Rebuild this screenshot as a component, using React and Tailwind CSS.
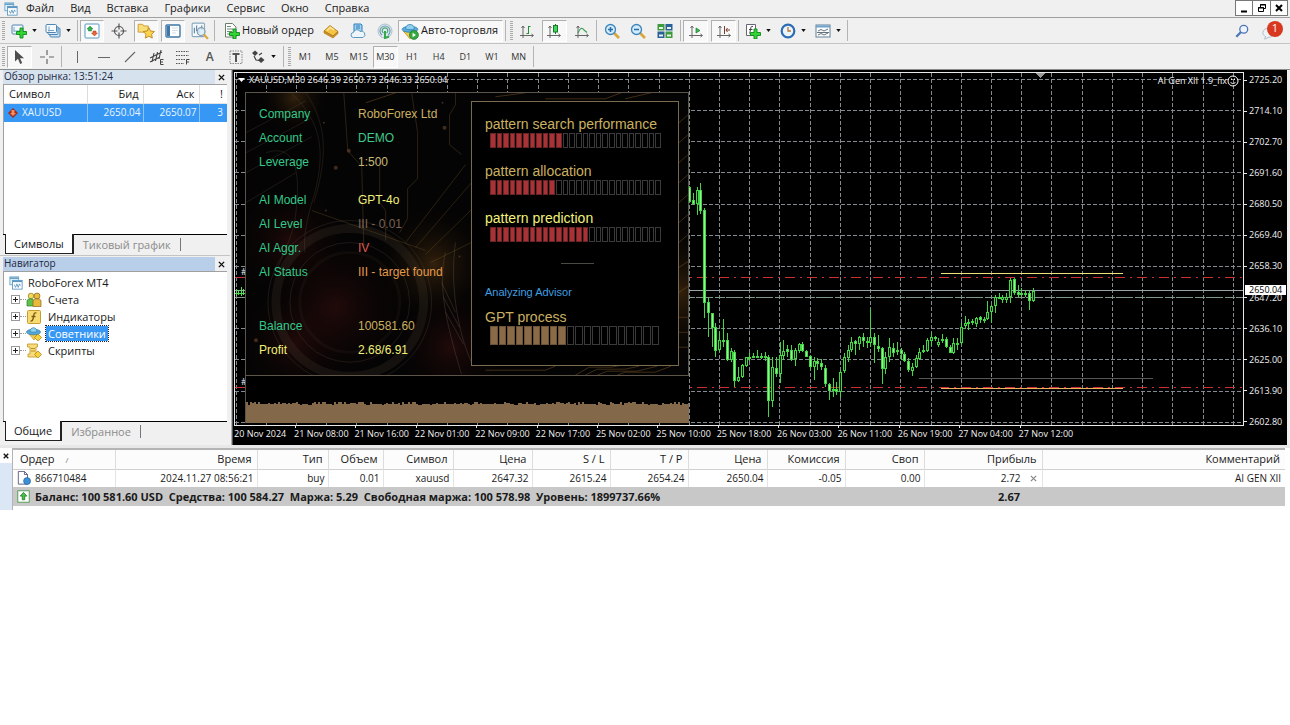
// src/App.jsx
import React from "react";

const MENU = ["Файл", "Вид", "Вставка", "Графики", "Сервис", "Окно", "Справка"];
const TIMEFRAMES = ["M1", "M5", "M15", "M30", "H1", "H4", "D1", "W1", "MN"];

const PRICES = [
  "2725.20", "2714.10", "2702.70", "2691.60", "2680.50", "2669.40",
  "2658.30", "2647.20", "2636.10", "2625.00", "2613.90", "2602.80",
];

const TIMES = [
  "21 Nov 08:00", "21 Nov 16:00", "22 Nov 01:00", "22 Nov 09:00", "22 Nov 17:00",
  "25 Nov 02:00", "25 Nov 10:00", "25 Nov 18:00", "26 Nov 03:00", "26 Nov 11:00",
  "26 Nov 19:00", "27 Nov 04:00", "27 Nov 12:00",
];

// [high, low, body top, body bottom, rising]
const CANDLES = [
  [114, 131, 115, 130, 0], [121, 133, 128, 132, 0], [115, 143, 118, 132, 1], [111, 142, 118, 139, 0],
  [136, 246, 138, 231, 0], [226, 265, 230, 241, 0], [241, 275, 241, 256, 0], [251, 285, 255, 279, 0],
  [260, 280, 268, 278, 1], [247, 275, 268, 269, 1], [261, 289, 268, 288, 0], [276, 290, 279, 288, 1],
  [278, 315, 280, 309, 0], [295, 310, 305, 309, 1], [292, 306, 293, 305, 1], [285, 295, 285, 294, 1],
  [281, 289, 285, 286, 1], [281, 286, 284, 285, 1], [278, 286, 284, 285, 1], [281, 287, 284, 286, 0],
  [280, 289, 284, 285, 1], [283, 345, 285, 329, 0], [285, 335, 295, 329, 1], [285, 305, 296, 302, 0],
  [270, 311, 283, 302, 1], [268, 288, 279, 284, 1], [273, 285, 277, 280, 0], [273, 289, 278, 288, 0],
  [276, 294, 278, 287, 1], [271, 281, 272, 279, 1], [270, 280, 272, 279, 0], [278, 285, 279, 285, 0],
  [283, 298, 284, 295, 0], [285, 308, 289, 295, 1], [286, 298, 289, 292, 0], [287, 298, 291, 295, 0],
  [293, 315, 296, 312, 0], [311, 328, 312, 319, 0], [306, 325, 317, 319, 0], [310, 323, 317, 320, 0],
  [298, 325, 300, 320, 1], [281, 301, 285, 299, 1], [273, 290, 278, 286, 1], [265, 280, 270, 278, 1],
  [268, 283, 269, 272, 0], [264, 278, 265, 272, 1], [261, 275, 265, 269, 0], [265, 276, 269, 271, 0],
  [237, 275, 265, 271, 1], [261, 291, 265, 273, 0], [263, 280, 274, 277, 0], [275, 312, 276, 297, 0],
  [280, 302, 285, 297, 1], [266, 290, 275, 285, 1], [271, 285, 276, 281, 0], [270, 283, 278, 280, 1],
  [276, 288, 278, 282, 0], [280, 290, 282, 289, 0], [286, 300, 289, 298, 0], [291, 304, 295, 299, 1],
  [283, 296, 286, 295, 1], [276, 288, 280, 287, 1], [273, 281, 278, 280, 0], [266, 280, 268, 279, 1],
  [261, 274, 265, 269, 1], [264, 269, 265, 267, 0], [266, 275, 270, 273, 1], [262, 271, 267, 269, 1],
  [265, 276, 267, 275, 0], [273, 281, 275, 281, 0], [266, 282, 271, 281, 1], [266, 278, 271, 272, 1],
  [251, 273, 255, 271, 1], [244, 257, 251, 254, 1], [247, 258, 250, 252, 1], [247, 253, 249, 251, 0],
  [245, 255, 246, 252, 1], [244, 251, 245, 248, 0], [245, 251, 247, 249, 1], [229, 248, 240, 247, 1],
  [233, 251, 234, 240, 1], [223, 241, 225, 234, 1], [221, 227, 225, 227, 0], [223, 231, 225, 228, 1],
  [221, 231, 225, 228, 1], [206, 231, 208, 225, 1], [206, 223, 207, 221, 0], [213, 225, 220, 223, 0],
  [216, 225, 221, 222, 1], [218, 225, 221, 222, 1], [218, 238, 221, 229, 0], [216, 230, 219, 229, 1],
];

const INFO = [
  [
    ["Company", "RoboForex Ltd", "text-[#cbb061]"],
    ["Account", "DEMO", "text-[#3fc98b]"],
    ["Leverage", "1:500", "text-[#c9b877]"],
  ],
  [
    ["AI Model", "GPT-4o", "text-[#f1f07a]"],
    ["AI Level", "III - 0.01", "text-[#7b6353]"],
    ["AI Aggr.", "IV", "text-[#dc5a4e]"],
    ["AI Status", "III - target found", "text-[#e39a4a]"],
  ],
  [
    ["Balance", "100581.60", "text-[#cbb061]"],
    ["Profit", "2.68/6.91", "text-[#f1f07a]", "text-[#f1f07a]"],
  ],
];

const ORDER_COLUMNS = [
  ["Время", "2024.11.27 08:56:21", "w-[142px]"],
  ["Тип", "buy", "w-[71px]"],
  ["Объем", "0.01", "w-[55px]"],
  ["Символ", "xauusd", "w-[70px]"],
  ["Цена", "2647.32", "w-[79px]"],
  ["S / L", "2615.24", "w-[78px]"],
  ["T / P", "2654.24", "w-[78px]"],
  ["Цена", "2650.04", "w-[79px]"],
  ["Комиссия", "-0.05", "w-[78px]"],
  ["Своп", "0.00", "w-[79px]"],
];

/* ---------- icons ---------- */

function Icon({ children, size = "size-4" }) {
  return (
    <svg viewBox="0 0 16 16" className={`${size} shrink-0`} fill="none" aria-hidden="true">
      {children}
    </svg>
  );
}

const Plus = () => (
  <path d="M9 6h3v3.500h3.500v3H12V16H9v-3.500H5.500v-3H9z" fill="#35d435" stroke="#0b8a1c" strokeWidth=".9" />
);

const Axes = ({ children }) => (
  <Icon>
    <path d="M4 3v12M1 12.500h13M2.500 5 4 3l1.500 2M12.500 11l2 1.500-2 1.500" stroke="#666" />
    {children}
  </Icon>
);

const AppIcon = () => (
  <Icon size="size-[14px]">
    <rect x="1" y="1" width="10" height="9" fill="#e7f3fb" stroke="#6ba3c8" />
    <path d="M1 2.500h10" stroke="#6ba3c8" strokeWidth="2" />
    <rect x="4" y="5" width="11" height="10" fill="#fff" stroke="#5b97c0" />
    <path d="M4 6h11" stroke="#5b97c0" strokeWidth="2" />
    <path d="m6 10 1.500 3L9 9l1.500 4L12 9l1 2" stroke="#5b97c0" />
  </Icon>
);

const NewChartIcon = () => (
  <Icon>
    <rect x="1" y="2" width="11" height="9" rx="1" fill="#f3f9fd" stroke="#4f86b3" />
    <path d="M3 4v5M3 8h7" stroke="#7aa6c4" />
    <g transform="translate(0 -1)"><Plus /></g>
  </Icon>
);

const ProfilesIcon = () => (
  <Icon>
    <rect x="5" y="5" width="10" height="9" rx="1" fill="#cfe2f1" stroke="#4f86b3" />
    <rect x="3" y="3.500" width="10" height="8" rx="1" fill="#dcebf6" stroke="#4f86b3" />
    <rect x="1" y="1.500" width="10.500" height="8" rx="1" fill="#f3f9fd" stroke="#4f86b3" />
    <path d="M3 7.500h6M4 3.500v5" stroke="#7aa6c4" />
  </Icon>
);

const MarketIcon = () => (
  <Icon>
    <rect x="1" y="1" width="14" height="14" rx="1" fill="#fbfdff" stroke="#5b97c0" />
    <path d="M6 3 9 6H7.500v2h-3V6H3z" fill="#35b14a" stroke="#167a2a" strokeWidth=".5" />
    <path d="m10.500 13-3-3H9V8h3v2h1.500z" fill="#e8673a" stroke="#a83415" strokeWidth=".5" />
  </Icon>
);

const CrosshairIcon = () => (
  <Icon>
    <circle cx="8" cy="8" r="4.500" stroke="#555" strokeWidth="1.200" />
    <path d="M8 .5v6M8 9.500v6M.5 8h6M9.500 8h6" stroke="#555" strokeWidth="1.200" />
  </Icon>
);

const FolderStarIcon = () => (
  <Icon size="size-[18px]">
    <path d="M1 2h4l1 1.500h4V9H1z" fill="#f9dd76" stroke="#c9973a" strokeWidth=".8" />
    <path d="m10.500 5 1.500 3 3.500.5-2.500 2.400.6 3.400-3.100-1.600-3.100 1.600.6-3.400L5.500 8.500 9 8z" fill="#fbd44e" stroke="#b9821e" strokeWidth=".8" />
  </Icon>
);

const TerminalIcon = () => (
  <Icon>
    <rect x="1" y="2" width="14" height="12" rx="1" fill="#fff" stroke="#3f76a6" strokeWidth="1.400" />
    <path d="M3.500 3v10" stroke="#3f76a6" strokeWidth="3" />
    <path d="M7 5h6M7 7.500h6M7 10h4" stroke="#cfdeea" />
  </Icon>
);

const TesterIcon = () => (
  <Icon size="size-[18px]">
    <rect x="1" y="1" width="11" height="12" rx="1" fill="#f2f7fb" stroke="#8aa9c0" />
    <path d="M3 5v5M5 3v5M7 6v4M9.500 3v4" stroke="#5f86a5" />
    <circle cx="9" cy="8.500" r="3.500" fill="#d9edf9" fillOpacity=".8" stroke="#7f98aa" />
    <path d="m11.500 11 3.500 4" stroke="#dba63a" strokeWidth="2" />
  </Icon>
);

const NewOrderIcon = () => (
  <Icon>
    <path d="M1.500.5h7L12 4v10H1.500z" fill="#fff" stroke="#6d7d6d" />
    <path d="M3 3.500h4M3 6h6M3 8.500h5M3 11h3" stroke="#6f8f6f" />
    <Plus />
  </Icon>
);

const GoldIcon = () => (
  <Icon>
    <path d="m1 8 6-5.500L15 8.500 10 13z" fill="#f6c445" stroke="#a8741a" strokeWidth=".8" />
    <path d="m1 8 9 5 5-4.500v2L10 15 1 10z" fill="#cf9426" stroke="#a8741a" strokeWidth=".6" />
    <path d="m4 7.500 3.500-3 3.500 2.500" stroke="#fdeaa0" strokeWidth="1.500" />
  </Icon>
);

const CloudIcon = () => (
  <Icon>
    <path d="M4 1h7l1 1v7H4z" fill="#9fd1ef" stroke="#2f7fbd" />
    <path d="M6 3h4M6 5h4" stroke="#2f7fbd" />
    <path d="M3.500 14.500a2.500 2.500 0 0 1 0-5 3.500 3.500 0 0 1 6.500-1 3 3 0 0 1 3 6z" fill="#eef6fc" stroke="#5b97c0" />
  </Icon>
);

const SignalIcon = () => (
  <Icon>
    <circle cx="8" cy="8" r="7" fill="#dfe9f0" stroke="#a9bfcd" />
    <path d="M5 12a5 5 0 1 1 6 0" stroke="#6f9bb5" strokeWidth="1.200" />
    <path d="M6.500 10a2.800 2.800 0 1 1 3 0" stroke="#4aa86a" strokeWidth="1.200" />
    <path d="M8 8v7l4-1.500" stroke="#34a84a" strokeWidth="2" />
  </Icon>
);

const AutoIcon = () => (
  <Icon size="size-[18px]">
    <path d="m2 8 6 7 6-7z" fill="#f5cd4b" stroke="#b98b22" strokeWidth=".7" />
    <ellipse cx="8" cy="6.500" rx="7" ry="2.600" fill="#5aaede" stroke="#2e7caf" strokeWidth=".7" />
    <path d="M4 6c0-5 8-5 8 0-2 1.200-6 1.200-8 0z" fill="#8fd0ef" stroke="#2e7caf" strokeWidth=".7" />
    <circle cx="11.500" cy="11.500" r="4" fill="#35a93f" stroke="#1a7426" strokeWidth=".6" />
    <path d="m10.300 9.500 3 2-3 2z" fill="#fff" />
  </Icon>
);

const BarsIcon = () => (
  <Axes><path d="M9.500 3v8M9.500 3.500h2M7.500 10.500h2" stroke="#1f8f37" /></Axes>
);
const CandlesIcon = () => (
  <Axes>
    <path d="M9.500 1v10" stroke="#167a2a" />
    <rect x="7.500" y="2.500" width="4" height="6.500" fill="#3fd65a" stroke="#167a2a" />
  </Axes>
);
const LineIcon = () => (
  <Axes><path d="M4 10c2-5 4-6 6-3l3 2.500" stroke="#3fa055" strokeWidth="1.200" /></Axes>
);
const AutoScrollIcon = () => (
  <Axes><path d="m8 5 4 2.500L8 10z" fill="#3fb857" stroke="#167a2a" strokeWidth=".7" /></Axes>
);
const ShiftIcon = () => (
  <Axes><path d="M8.500 3v8M14 7h-4M11.500 5 10 7l1.500 2" stroke="#7a3b2a" /></Axes>
);

const ZoomIcon = ({ plus }) => (
  <Icon>
    <path d="m10 10 5 5" stroke="#d9a63c" strokeWidth="2.600" />
    <circle cx="6.500" cy="6.500" r="5" fill="#d3ebfa" stroke="#3c86bd" strokeWidth="1.300" />
    <path d={plus ? "M4 6.500h5M6.500 4v5" : "M4 6.500h5"} stroke="#2a6ea8" strokeWidth="1.500" />
  </Icon>
);

const TileIcon = () => (
  <Icon>
    <rect x=".5" y="1" width="7" height="6.500" fill="#3f9a3d" />
    <rect x="8.500" y="1" width="7" height="6.500" fill="#2a5f9a" />
    <rect x=".5" y="8.500" width="7" height="6.500" fill="#2a5f9a" />
    <rect x="8.500" y="8.500" width="7" height="6.500" fill="#3f9a3d" />
    <path d="M2 5h4M10 5h4M2 12.500h4M10 12.500h4" stroke="#e6f2e6" strokeWidth="2" />
  </Icon>
);

const IndicatorsIcon = () => (
  <Icon>
    <path d="M1.500 1.500h9v11h-9z" fill="#fff" stroke="#667" />
    <path d="M8 3.500c-2-.7-2 .5-2.500 3S5 10.500 4 10.500M4 6.500h3.500" stroke="#444" />
    <Plus />
  </Icon>
);

const ClockIcon = () => (
  <Icon>
    <circle cx="8" cy="8" r="6.300" fill="#eaf5fd" stroke="#2d6db3" strokeWidth="2.200" />
    <path d="M8 4v4h3" stroke="#c2702d" strokeWidth="1.300" />
  </Icon>
);

const TemplateIcon = () => (
  <Icon>
    <rect x="1" y="2" width="14" height="12" fill="#fff" stroke="#5d7f9b" />
    <path d="M1 3.500h14" stroke="#6fa3cb" strokeWidth="2" />
    <path d="m3 8 3-1.500L9 8l4-2M3 12l3-1.500L9 12l4-2M2 9.500h12" stroke="#55626d" strokeWidth=".9" />
  </Icon>
);

const CursorIcon = () => (
  <Icon><path d="M4 1v11.500l3-2.700L9.200 15l2-.9L9 9.300h4z" fill="#4d4d4d" /></Icon>
);
const CrossIcon = () => (
  <Icon><path d="M8 1v5M8 10v5M1 8h5M10 8h5" stroke="#666" strokeWidth="1.200" /></Icon>
);
const VLineIcon = () => <Icon><path d="M8.500 2v12" stroke="#666" /></Icon>;
const HLineIcon = () => <Icon><path d="M2 8.500h12" stroke="#666" /></Icon>;
const TrendIcon = () => <Icon><path d="M3 13 13 3" stroke="#666" strokeWidth="1.100" /></Icon>;
const ChannelIcon = () => (
  <Icon>
    <path d="m1 9 12-6M1 13l10-5M5 4 3 13M8.500 3l-2 9M12 1l-2 9" stroke="#444" strokeWidth="1.100" />
    <path d="M14.500 10.500h-3v5h3M11.500 13h2.500" stroke="#444" />
  </Icon>
);
const FiboIcon = () => (
  <Icon>
    <path d="M1 2.500h13M1 6.500h13M1 10.500h9M1 14.500h8" stroke="#555" strokeDasharray="1.500 1" />
    <path d="M14.500 10.500h-3v5M11.500 13h2.500" stroke="#444" />
  </Icon>
);
const LabelIcon = () => (
  <Icon>
    <rect x="2" y="2" width="12" height="12.500" stroke="#888" strokeDasharray="1.500 1" />
    <path d="M4.500 5h7M8 5v8" stroke="#555" strokeWidth="2" />
  </Icon>
);
const ArrowsIcon = () => (
  <Icon>
    <path d="m2 4 3-2.500L8 4 5 7zM8 11l3-3 3.500 3-3.500 3z" fill="#444" />
    <path d="m4 7 2 4 3 .5M9 6l3-2" stroke="#444" strokeWidth="1.200" />
  </Icon>
);

const Caret = () => (
  <svg viewBox="0 0 6 4" className="h-[3px] w-[5px] shrink-0" aria-hidden="true">
    <path d="M0 0h6L3 4z" fill="#111" />
  </svg>
);

/* ---------- toolbar ---------- */

function Tool({ label, pressed, caret, children }) {
  return (
    <button
      type="button"
      aria-label={label}
      className={`flex h-[22px] items-center justify-center gap-[5px] border ${
        pressed ? "border-[#b0b0b0] border-r-white border-b-white bg-[#f8f8f8]" : "border-transparent"
      }`}
    >
      {children}
      {caret && <Caret />}
    </button>
  );
}

const Sep = () => <span className="mx-[2px] h-[21px] w-px shrink-0 bg-[#b4b4b4]" />;
const Grip = () => (
  <span className="mx-[2px] h-[20px] w-[3px] shrink-0 bg-[repeating-linear-gradient(#aaa_0_1px,#f0f0f0_1px_2px)]" />
);

function MenuBar() {
  return (
    <div className="flex h-[18px] items-center border-b border-[#a0a0a0] pl-1">
      <AppIcon />
      <nav className="flex gap-[16px] pb-[2px] pl-2 text-[11px] leading-[14px]">
        {MENU.map((m) => (
          <button key={m} type="button">{m}</button>
        ))}
      </nav>
      <div className="mr-[2px] ml-auto flex self-start">
        <button type="button" aria-label="Свернуть" className="flex h-[16px] w-[18px] items-center justify-center border border-[#777] bg-white">
          <svg viewBox="0 0 10 10" className="size-[10px]"><path d="M2 8.500h6" stroke="#000" strokeWidth="2" /></svg>
        </button>
        <button type="button" aria-label="Восстановить" className="flex h-[16px] w-[18px] items-center justify-center border border-l-0 border-[#777] bg-white">
          <svg viewBox="0 0 10 10" className="size-[10px]" fill="none" stroke="#000">
            <path d="M3.500 4V1.500h5v4H6.500M3 2h6M1.500 4.500h5v4h-5zM1 5h6" />
          </svg>
        </button>
        <button type="button" aria-label="Закрыть" className="flex h-[16px] w-[17px] items-center justify-center border border-l-0 border-[#777] bg-white">
          <svg viewBox="0 0 10 10" className="size-[10px]"><path d="m2 2 6 6M8 2 2 8" stroke="#000" strokeWidth="2" /></svg>
        </button>
      </div>
    </div>
  );
}

function MainToolbar() {
  return (
    <div className="flex h-[26px] items-center border-b border-[#c4c4c4]">
      <Grip />
      <div className="grid w-[68px] grid-cols-2">
        <Tool label="Новый график" caret><NewChartIcon /></Tool>
        <Tool label="Профили" caret><ProfilesIcon /></Tool>
      </div>
      <Sep />
      <div className="grid w-[132px] grid-cols-5 gap-[3px]">
        <Tool label="Обзор рынка" pressed><MarketIcon /></Tool>
        <Tool label="Окно данных"><CrosshairIcon /></Tool>
        <Tool label="Навигатор" pressed><FolderStarIcon /></Tool>
        <Tool label="Терминал" pressed><TerminalIcon /></Tool>
        <Tool label="Тестер стратегий"><TesterIcon /></Tool>
      </div>
      <Sep />
      <button type="button" className="flex h-[22px] w-[101px] items-center gap-[2px] pl-[7px] text-[11px] whitespace-nowrap">
        <NewOrderIcon />
        Новый ордер
      </button>
      <div className="grid w-[80px] grid-cols-3">
        <Tool label="MetaEditor"><GoldIcon /></Tool>
        <Tool label="VPS"><CloudIcon /></Tool>
        <Tool label="Сигналы"><SignalIcon /></Tool>
      </div>
      <button
        type="button"
        className="flex h-[22px] w-[105px] items-center gap-[2px] border border-[#b0b0b0] border-r-white border-b-white bg-[#f8f8f8] pl-[2px] text-[11px] whitespace-nowrap"
      >
        <AutoIcon />
        Авто-торговля
      </button>
      <Sep />
      <Grip />
      <div className="grid w-[79px] grid-cols-3 gap-[3px]">
        <Tool label="Бары"><BarsIcon /></Tool>
        <Tool label="Свечи" pressed><CandlesIcon /></Tool>
        <Tool label="Линия"><LineIcon /></Tool>
      </div>
      <Sep />
      <div className="grid w-[79px] grid-cols-3">
        <Tool label="Приблизить"><ZoomIcon plus /></Tool>
        <Tool label="Отдалить"><ZoomIcon /></Tool>
        <Tool label="Упорядочить окна"><TileIcon /></Tool>
      </div>
      <Sep />
      <div className="grid w-[53px] grid-cols-2 gap-[3px]">
        <Tool label="Автопрокрутка" pressed><AutoScrollIcon /></Tool>
        <Tool label="Сдвиг графика" pressed><ShiftIcon /></Tool>
      </div>
      <Sep />
      <div className="grid w-[104px] grid-cols-3">
        <Tool label="Индикаторы" caret><IndicatorsIcon /></Tool>
        <Tool label="Периоды" caret><ClockIcon /></Tool>
        <Tool label="Шаблоны" caret><TemplateIcon /></Tool>
      </div>
      <Sep />
      <div className="mr-[7px] ml-auto flex items-center gap-3">
        <button type="button" aria-label="Поиск">
          <Icon size="size-[14px]">
            <path d="m8 8-6.500 6.500" stroke="#4d74b8" strokeWidth="2.600" />
            <circle cx="10" cy="6" r="4.500" fill="#eef4fb" stroke="#4d74b8" strokeWidth="1.500" />
          </Icon>
        </button>
        <button type="button" aria-label="Уведомления" className="relative h-[20px] w-[22px]">
          <svg viewBox="0 0 22 22" className="size-[20px]">
            <path d="M8 8a6 6 0 0 0-6 5c0 2 1 3 3 4l-1 3 4-2c4 0 6-2 6-5z" fill="#eef3f6" stroke="#a9bcc7" />
          </svg>
          <span className="absolute top-0 right-0 flex size-[16px] items-center justify-center rounded-full bg-[#d8381f] text-[11px] text-white">1</span>
        </button>
      </div>
    </div>
  );
}

function DrawToolbar() {
  return (
    <div className="flex h-[25px] items-center">
      <Grip />
      <div className="grid w-[52px] grid-cols-2 gap-[3px]">
        <Tool label="Курсор" pressed><CursorIcon /></Tool>
        <Tool label="Перекрестие"><CrossIcon /></Tool>
      </div>
      <Sep />
      <div className="grid w-[212px] grid-cols-8">
        <Tool label="Вертикальная линия"><VLineIcon /></Tool>
        <Tool label="Горизонтальная линия"><HLineIcon /></Tool>
        <Tool label="Трендовая линия"><TrendIcon /></Tool>
        <Tool label="Канал"><ChannelIcon /></Tool>
        <Tool label="Фибоначчи"><FiboIcon /></Tool>
        <Tool label="Текст"><span className="text-[12px] font-semibold text-[#555]">A</span></Tool>
        <Tool label="Метка"><LabelIcon /></Tool>
        <Tool label="Стрелки" caret><ArrowsIcon /></Tool>
      </div>
      <span className="w-[5px]" />
      <Sep />
      <Grip />
      <div className="grid w-[238px] grid-cols-9 gap-[2px] text-[9px] text-[#333]">
        {TIMEFRAMES.map((t) => (
          <Tool key={t} label={t} pressed={t === "M30"}>{t}</Tool>
        ))}
      </div>
      <Sep />
    </div>
  );
}

/* ---------- left column ---------- */

function PanelTitle({ text, active }) {
  return (
    <div className="flex h-[14px] items-center">
      <h2 className={`h-full flex-1 pl-px text-[10px] leading-[13px] text-[#1c2740] ${active ? "bg-[#b9cee9]" : "bg-[#d7e2ef]"}`}>
        {text}
      </h2>
      <button type="button" aria-label="Закрыть" className="flex w-[12px] justify-center">
        <svg viewBox="0 0 8 8" className="size-[7px]"><path d="m1 1 6 6M7 1 1 7" stroke="#111" strokeWidth="1.600" /></svg>
      </button>
    </div>
  );
}

function PanelTabs({ active, other }) {
  return (
    <div className="flex h-[20px] text-[11px] leading-[17px]">
      <span className="w-[2px] border-t border-black bg-[#f0f0f0]" />
      <button type="button" className="border border-t-0 border-r-2 border-[#222] bg-white px-[8px]">{active}</button>
      <div className="flex flex-1 items-center border-t border-black bg-[#f0f0f0]">
        <button type="button" className="border-r border-[#777] px-[9px] leading-[13px] text-[#8b8b8b]">{other}</button>
      </div>
    </div>
  );
}

function MarketWatch() {
  return (
    <section className="flex h-[184px] flex-col px-[3px]">
      <PanelTitle text="Обзор рынка: 13:51:24" />
      <div className="flex-1 border-t border-l border-[#a0a0a0] bg-white">
        <table className="w-full table-fixed text-[11px]">
          <thead>
            <tr className="h-[18px] border-b border-[#e3e3e3]">
              <th className="w-[83px] border-r border-[#dcdcdc] pl-[5px] text-left font-normal">Символ</th>
              <th className="w-[56px] border-r border-[#dcdcdc] pr-1 text-right font-normal">Бид</th>
              <th className="w-[56px] border-r border-[#dcdcdc] pr-1 text-right font-normal">Аск</th>
              <th className="pr-1 text-right font-normal">!</th>
            </tr>
          </thead>
          <tbody>
            <tr className="h-[19px] bg-[#3797f4] text-[#eaf6ff]">
              <td className="border-r border-[#8cc3f8] pl-[4px]">
                <span className="flex items-center gap-[4px] text-[10px]">
                  <svg viewBox="0 0 10 10" className="size-[10px]">
                    <path d="M5 0 10 5 5 10 0 5z" fill="#9c2d1f" />
                    <path d="M3.500 2h3v3H8L5 8 2 5h1.500z" fill="#f58a5a" />
                  </svg>
                  XAUUSD
                </span>
              </td>
              <td className="border-r border-[#8cc3f8] pr-[2px] text-right text-[10px]">2650.04</td>
              <td className="border-r border-[#8cc3f8] pr-[2px] text-right text-[10px]">2650.07</td>
              <td className="pr-[4px] text-right text-[10px]">3</td>
            </tr>
          </tbody>
        </table>
      </div>
      <PanelTabs active="Символы" other="Тиковый график" />
    </section>
  );
}

const AccountsIcon = () => (
  <Icon>
    <circle cx="5" cy="4" r="2.800" fill="#f3d95a" stroke="#8a7a1c" strokeWidth=".7" />
    <path d="M1 14V9c0-3 7-3 7 0v5z" fill="#5cc04a" stroke="#2f7f22" strokeWidth=".7" />
    <circle cx="11" cy="4" r="3" fill="#e8b93a" stroke="#8a641c" strokeWidth=".7" />
    <path d="M7 14.500V9c0-3 8-3 8 0v5.500z" fill="#e8b93a" stroke="#8a641c" strokeWidth=".7" />
  </Icon>
);
const FunctionIcon = () => (
  <Icon>
    <rect x="1.500" y="1.500" width="13" height="13" rx="1" fill="#f8dc72" stroke="#c79c32" />
    <path d="M10.500 4c-3-1-2.500 2-3 4s-.5 4.500-3 4M5.500 7.500h4" stroke="#7a5a12" strokeWidth="1.300" />
  </Icon>
);
const ExpertIcon = () => (
  <Icon>
    <path d="m3 8 5 6 5-6z" fill="#f2cb4a" stroke="#b98b22" strokeWidth=".6" />
    <ellipse cx="7.500" cy="6" rx="7" ry="2.800" fill="#55a9da" stroke="#2e7caf" strokeWidth=".7" />
    <path d="M4 5.500c0-5 7-5 7 0-2 1-5 1-7 0z" fill="#8fd0ef" stroke="#2e7caf" strokeWidth=".7" />
    <path d="m12 8 3.500 3.500L12 15l-3.500-3.500z" fill="#f6d23c" stroke="#a87c16" strokeWidth=".7" />
  </Icon>
);
const ScriptIcon = () => (
  <Icon>
    <path d="M1.500 1h10v3H10v7h1v3H2v-3h2V4H1.500z" fill="#f7dc7c" stroke="#c79c32" strokeWidth=".9" />
    <path d="M5 5.500h4M5 8h4" stroke="#b98b22" />
    <path d="m12 8 3.500 3.500L12 15l-3.500-3.500z" fill="#f6d23c" stroke="#a87c16" strokeWidth=".7" />
  </Icon>
);

const TREE = [
  ["Счета", AccountsIcon],
  ["Индикаторы", FunctionIcon],
  ["Советники", ExpertIcon],
  ["Скрипты", ScriptIcon],
];

function Navigator() {
  return (
    <section className="flex flex-1 flex-col px-[3px]">
      <PanelTitle text="Навигатор" active />
      <div className="flex-1 border-t border-l border-[#a0a0a0] bg-white pt-[2px] text-[11px] leading-[15px]">
        <div className="flex h-[17px] items-center gap-[5px] pl-[5px]">
          <AppIcon />
          RoboForex MT4
        </div>
        <ul>
          {TREE.map(([name, TreeIcon]) => (
            <li key={name} className="flex h-[17px] items-center pl-[7px]">
              <button type="button" aria-label={`Развернуть ${name}`} className="flex size-[9px] items-center justify-center border border-[#999] bg-white">
                <svg viewBox="0 0 5 5" className="size-[5px]"><path d="M0 2.500h5M2.500 0v5" stroke="#222" /></svg>
              </button>
              <span className="w-[6px] border-t border-dotted border-[#999]" />
              <TreeIcon />
              <span
                className={`ml-[4px] px-[2px] ${
                  name === "Советники" ? "bg-[#3797f4] text-white outline outline-dotted outline-[#222]" : ""
                }`}
              >
                {name}
              </span>
            </li>
          ))}
        </ul>
      </div>
      <PanelTabs active="Общие" other="Избранное" />
    </section>
  );
}

/* ---------- advisor overlay ---------- */

function Meter({ total, filled, tall }) {
  return (
    <div className={`ml-[5px] flex gap-px ${tall ? "h-[19px] w-[169px]" : "h-[15px] w-[171px]"}`}>
      {Array.from({ length: total }, (_, i) => (
        <span
          key={i}
          className={`flex-1 border ${
            i >= filled
              ? "border-[#3a3a3a]"
              : tall
                ? "border-[#6a5238] bg-[#8a6b48]"
                : "border-[#6b2426] bg-[#a83236]"
          }`}
        />
      ))}
    </div>
  );
}

function PanelArt() {
  return (
    <svg className="absolute inset-0 h-full w-full" viewBox="0 0 443 283" preserveAspectRatio="xMidYMid slice" fill="none" aria-hidden="true">
      <defs>
        <radialGradient id="amber"><stop stopColor="#6a4418" stopOpacity=".45" /><stop offset="1" stopColor="#000" stopOpacity="0" /></radialGradient>
        <radialGradient id="rust"><stop stopColor="#4a1512" stopOpacity=".4" /><stop offset="1" stopColor="#000" stopOpacity="0" /></radialGradient>
      </defs>
      <rect width="443" height="283" fill="#050404" />
      <circle cx="48" cy="5" r="36" fill="url(#amber)" />
      <circle cx="188" cy="172" r="60" fill="url(#amber)" />
      <circle cx="45" cy="150" r="60" fill="url(#rust)" />
      <circle cx="205" cy="255" r="60" fill="url(#rust)" />
      <circle cx="50" cy="250" r="60" fill="url(#rust)" />
      <circle cx="90" cy="215" r="80" fill="url(#rust)" />
      <circle cx="435" cy="200" r="70" fill="url(#amber)" />
      <g stroke="#6e6250" strokeOpacity=".22">
        <circle cx="104" cy="210" r="74" strokeWidth="9" strokeOpacity=".14" />
        <circle cx="104" cy="210" r="60" />
        <circle cx="104" cy="210" r="82" />
        <circle cx="104" cy="210" r="50" strokeWidth="3" strokeOpacity=".08" />
        <path d="M45 0c32 30 34 60 24 100-6 20-12 40-10 60M60 0c24 35 20 70 8 110M20 60c30-10 35 20 30 60-2 20-8 30-20 60M0 40 60 8M0 60 64 26M0 80l66-36M0 110l50-30" />
        <path d="M66 118 180 158M170 155 226 90M180 162l46-45M160 150l60-78M185 170l41-20" stroke="#8a6a30" strokeOpacity=".28" />
        <path d="M98 0l4 58 14 16 2 80M166 0l6 40v46l-10 10v30l-8 14M210 0v12l-6 10v30l12 10M134 70v40l6 8v30" stroke="#7a5a30" strokeOpacity=".35" />
        <path d="M200 160c-8 30 0 70 16 122M210 150c-6 40 2 90 16 120M196 190l14 30M198 205l16 30M200 220l18 32" stroke="#8a7a60" strokeOpacity=".25" />
        <path d="M434 30l9-8M434 50l9-8M434 70l9-8M434 90l9-8M434 110l9-8M434 130l9-8M434 150l9-8M434 175l9-6M434 200l9-6M434 225h9M434 240h9M434 255h9" stroke="#8a6030" strokeOpacity=".4" />
        <path d="M330 283l14-8h22l10-2M340 283l12-6h28l14-3M352 283l10-4h30l20-5M372 283l8-3h30l16-6M240 278h60l10-4M120 10l30-10M250 4l30-4M300 6h60l16-6M380 6l26-6" stroke="#96692f" strokeOpacity=".4" />
      </g>
      <g fill="#8a5a40" fillOpacity=".45">
        <circle cx="103" cy="58" r="2" /><circle cx="90" cy="75" r="2" /><circle cx="199" cy="35" r="2" />
        <circle cx="197" cy="10" r="1" /><circle cx="78" cy="30" r="1" /><circle cx="214" cy="164" r="1" />
        <circle cx="10" cy="248" r="2" /><circle cx="30" cy="262" r="1" /><circle cx="80" cy="118" r="1" />
      </g>
    </svg>
  );
}

function Wave() {
  // columns of the activity histogram, 2px wide
  const cols = Array.from({ length: 222 }, (_, i) => Math.floor(Math.abs(Math.sin(i * 12.9898) * 43758.5453) % 6));
  return (
    <svg className="block h-[21px] w-full" aria-hidden="true">
      {cols.map((c, i) => (
        <rect key={i} x={i * 2} y={c > 3 ? 2 : c} width="2" height="21" fill="#83694a" />
      ))}
    </svg>
  );
}

function AdvisorPanel() {
  return (
    <div className="absolute top-[19px] left-[10px] w-[444px] bg-black font-['Liberation_Sans',Arial,sans-serif]">
      <div className="relative flex h-[284px] border border-[#5e554a]">
        <PanelArt />
        <div className="relative flex flex-1 flex-col gap-[14px] pt-[9px] pl-[13px] text-[12px] leading-[24px]">
          {INFO.map((group, i) => (
            <dl key={i} className={`grid grid-cols-[99px_1fr] ${i === 2 ? "pt-[16px]" : ""}`}>
              {group.map(([name, value, color, nameColor]) => (
                <React.Fragment key={name}>
                  <dt className={nameColor || "text-[#33c98a]"}>{name}</dt>
                  <dd className={color}>{value}</dd>
                </React.Fragment>
              ))}
            </dl>
          ))}
        </div>
        <div className="relative mt-[8px] mr-[9px] mb-[9px] w-[208px] border border-[#7a6a50] bg-black pt-[13px] pl-[13px] text-[14px] leading-[18px] text-[#cbb061]">
          <p>pattern search performance</p>
          <Meter total={26} filled={11} />
          <p className="mt-[14px]">pattern allocation</p>
          <Meter total={26} filled={10} />
          <p className="mt-[14px] text-[#f1f07a]">pattern prediction</p>
          <Meter total={26} filled={15} />
          <hr className="mt-[21px] ml-[76px] w-[33px] border-[#4a4a44]" />
          <p className="mt-[19px] text-[11px] text-[#3f9fe0]">Analyzing Advisor</p>
          <p className="mt-[7px]">GPT process</p>
          <Meter total={20} filled={9} tall />
        </div>
      </div>
      <div className="border-l border-[#5e554a] pt-[26px]">
        <Wave />
      </div>
    </div>
  );
}

/* ---------- chart ---------- */

const GRID_STEP = 30.22;
const PRICE_STEP = 31.15;

function Plot() {
  return (
    <svg className="absolute inset-0 h-full w-full" shapeRendering="crispEdges" aria-hidden="true">
      <g stroke="#838b90" strokeDasharray="4 2">
        {Array.from({ length: 60 }, (_, i) => (
          <line key={i} x1={Math.round(0.5 + i * GRID_STEP) + 0.5} x2={Math.round(0.5 + i * GRID_STEP) + 0.5} y1="0" y2="100%" />
        ))}
        {PRICES.map((p, i) => (
          <line key={p} x1="0" x2="100%" y1={Math.round(6 + i * PRICE_STEP) + 0.5} y2={Math.round(6 + i * PRICE_STEP) + 0.5} />
        ))}
      </g>
      <g strokeDasharray="10 5 2 5" stroke="#cc2f2f">
        <line x1="0" x2="100%" y1="204.500" y2="204.500" />
        <line x1="0" x2="100%" y1="314.500" y2="314.500" />
      </g>
      <line x1="0" x2="100%" y1="217.500" y2="217.500" stroke="#9aa3a8" />
      <line x1="0" x2="100%" y1="224.500" y2="224.500" stroke="#7f9a86" strokeDasharray="9 2 2 2" />
      <line x1="684" x2="918" y1="305.500" y2="305.500" stroke="#565656" />
      <line x1="706" x2="888" y1="200.500" y2="200.500" stroke="#efe27a" />
      <line x1="706" x2="888" y1="315.500" y2="315.500" stroke="#f0b25c" />
      <path d="M801 0h9l-4.500 5z" fill="#9a9a9a" />
      <path d="M1 216v7M3.500 217v5M6 214v9M8.500 216v6M0 220h10" stroke="#4fe04f" />
      {CANDLES.map(([high, low, top, bottom, rising], i) => {
        const x = Math.round(454 + i * 3.777);
        return (
          <g key={i} stroke="#45d645">
            <line x1={x + 0.5} x2={x + 0.5} y1={high - 1} y2={low - 1} />
            <rect
              x={x - 0.5}
              y={top - 0.5}
              width="2"
              height={Math.max(bottom - top - 1, 1)}
              fill={rising ? "#041a04" : "#8df58d"}
            />
          </g>
        );
      })}
    </svg>
  );
}

function Chart() {
  return (
    <section className="mr-[3px] flex h-[375px] min-w-0 flex-1 border-l border-[#555] bg-black pt-[2px] text-[9px] leading-[12px] text-[#f2f2f2]">
      <div className="flex min-w-0 flex-1 flex-col pl-px">
        <div className="relative h-[354px] overflow-hidden border border-[#e8e8e8]">
          <Plot />
          <div className="absolute top-[1px] left-[3px] flex items-center gap-[4px] whitespace-pre">
            <svg viewBox="0 0 7 4" className="h-[4px] w-[7px]" aria-hidden="true"><path d="M0 0h7L3.500 4z" fill="#fff" /></svg>
            <span>XAUUSD,M30 2646.39 2650.73 2646.33 2650.04</span>
          </div>
          <div className="absolute top-[2px] right-[4px] flex items-center">
            AI Gen XII 1.9_fix
            <svg viewBox="0 0 12 12" className="size-[12px]" fill="none" stroke="#fff" aria-hidden="true">
              <circle cx="6" cy="6" r="5" />
              <path d="M3.500 7c1 2 4 2 5 0M4.500 3.500V5M7.500 3.500V5" />
            </svg>
          </div>
          <span className="absolute top-[193px] left-[6px]">#</span>
          <span className="absolute top-[303px] left-[6px]">#</span>
          <AdvisorPanel />
        </div>
        <div className="flex whitespace-nowrap">
          <span className="w-[60px] shrink-0 pt-[2px]">20 Nov 2024</span>
          <div className="grid w-[785px] shrink-0 grid-cols-13">
            {TIMES.map((t) => (
              <span key={t}>
                <span className="block h-[2px] w-[2px] border-r border-[#e8e8e8]" />
                {t}
              </span>
            ))}
          </div>
        </div>
      </div>
      <div className="relative flex h-[356px] w-[43px] shrink-0 flex-col justify-between pt-[2px]">
        {PRICES.map((p) => (
          <span key={p} className="flex items-center gap-[2px]">
            <span className="w-[3px] border-t border-[#e8e8e8]" />
            {p}
          </span>
        ))}
        <span className="absolute top-[213px] left-[1px] bg-white px-[4px] leading-[10px] text-black">2650.04</span>
      </div>
    </section>
  );
}

/* ---------- terminal ---------- */

function Terminal() {
  return (
    <section className="flex border-t-[3px] border-[#e8e8e8] pr-[5px]">
      <div className="flex w-[12px] shrink-0 flex-col">
        <button type="button" aria-label="Закрыть" className="flex h-[15px] items-center justify-center">
          <svg viewBox="0 0 8 8" className="size-[6px]"><path d="m1 1 6 6M7 1 1 7" stroke="#111" strokeWidth="1.800" /></svg>
        </button>
        <span className="flex-1 bg-[#dbe7f4]" />
      </div>
      <div className="min-w-0 flex-1 border-t-2 border-l border-[#b4b4b4] pb-[4px]">
        <table className="w-full table-fixed text-[11px] leading-[14px] whitespace-nowrap">
          <thead>
            <tr className="h-[19px] border-b border-[#d0d0d0] bg-[#fcfcfc]">
              <th className="w-[102px] border-r border-[#dcdcdc] pl-[7px] text-left font-normal">
                Ордер <span className="pl-2 text-[8px] text-[#777]">/</span>
              </th>
              {ORDER_COLUMNS.map(([name, , width], i) => (
                <th key={i} className={`${width} border-r border-[#dcdcdc] pr-[5px] text-right font-normal`}>{name}</th>
              ))}
              <th className="w-[118px] border-r border-[#dcdcdc] pr-[5px] text-right font-normal">Прибыль</th>
              <th className="pr-[5px] text-right font-normal">Комментарий</th>
            </tr>
          </thead>
          <tbody className="text-[10px]">
            <tr className="h-[18px]">
              <td className="border-r border-[#e4e4e4] pl-[4px]">
                <span className="flex items-center gap-[4px]">
                  <Icon size="size-[14px]">
                    <path d="M1.500.5h7L12 4v11H1.500z" fill="#fff" stroke="#557" />
                    <path d="M8.500.5V4H12" stroke="#557" />
                    <circle cx="11.500" cy="11.500" r="4" fill="#3c8fd6" stroke="#1d5c99" strokeWidth=".7" />
                  </Icon>
                  866710484
                </span>
              </td>
              {ORDER_COLUMNS.map(([, value], i) => (
                <td key={i} className="border-r border-[#e4e4e4] pr-[3px] text-right">{value}</td>
              ))}
              <td className="border-r border-[#e4e4e4] pr-[5px]">
                <span className="flex items-center justify-end gap-[9px]">
                  2.72
                  <button type="button" aria-label="Закрыть ордер">
                    <svg viewBox="0 0 8 8" className="size-[7px]"><path d="m1 1 6 6M7 1 1 7" stroke="#888" strokeWidth="1.400" /></svg>
                  </button>
                </span>
              </td>
              <td className="pr-[4px] text-right">AI GEN XII</td>
            </tr>
            <tr className="h-[19px] bg-[#c8c8c8] font-bold">
              <td colSpan={11} className="pl-[4px] text-[11px]">
                <span className="flex items-center gap-[5px] whitespace-pre">
                  <Icon size="size-[13px]">
                    <rect x="1" y="1" width="14" height="14" fill="#fff" stroke="#3d8f3d" />
                    <path d="m8 3 4 4.500H9.500V12h-3V7.500H4z" fill="#4dc04d" stroke="#1d7a1d" />
                  </Icon>
                  Баланс: 100 581.60 USD  Средства: 100 584.27  Маржа: 5.29  Свободная маржа: 100 578.98  Уровень: 1899737.66%
                </span>
              </td>
              <td className="pr-[22px] text-right text-[11px]">2.67</td>
              <td />
            </tr>
          </tbody>
        </table>
      </div>
    </section>
  );
}

export default function App() {
  return (
    <div className="min-h-screen bg-white font-['Open_Sans','Noto_Sans',sans-serif] text-[#1a1a1a]">
      <header className="bg-[#f0f0f0]">
        <MenuBar />
        <MainToolbar />
        <DrawToolbar />
      </header>
      <main className="flex border-t border-[#8a8a8a] bg-[#f0f0f0]">
        <aside className="flex w-[232px] shrink-0 flex-col border-r border-[#b0b0b0] pr-px">
          <MarketWatch />
          <div className="my-px border-t border-[#c4c4c4]" />
          <Navigator />
          <div className="h-[4px]" />
        </aside>
        <Chart />
      </main>
      <Terminal />
    </div>
  );
}
